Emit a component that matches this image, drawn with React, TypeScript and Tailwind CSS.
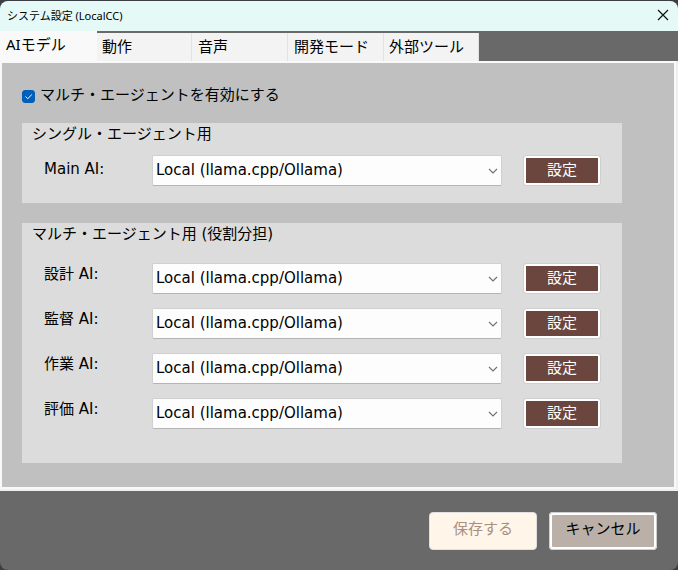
import React, { useState } from 'react';

const tabs = ['AIモデル', '動作', '音声', '開発モード', '外部ツール'];

const roles = [
    { id: 'design', label: '設計 AI:' },
    { id: 'supervise', label: '監督 AI:' },
    { id: 'work', label: '作業 AI:' },
    { id: 'review', label: '評価 AI:' },
];

const ModelRow: React.FC<{ id: string; label: string; top?: boolean }> = ({ id, label, top }) => (
    <div className="flex h-[31px] items-center">
        <label htmlFor={id} className={top ? 'w-[108px] shrink-0 self-start pt-px' : 'w-[108px] shrink-0 pb-1'}>
            {label}
        </label>
        <div className="relative min-w-0 flex-1">
            <select
                id={id}
                className="block h-[31px] w-full appearance-none rounded-xs border border-[#d0d0d0] border-b-[#b4b4b4] bg-[#fdfdfd] pb-px pl-[3px] pr-6 text-black"
            >
                <option>Local (llama.cpp/Ollama)</option>
            </select>
            <svg
                className="pointer-events-none absolute right-1 top-3 h-2 w-[10px]"
                viewBox="0 0 10 8"
                fill="none"
                stroke="#707070"
                strokeWidth="1.1"
            >
                <path d="M1 2 L5 6 L9 2" />
            </svg>
        </div>
        <button
            type="button"
            className="ml-[22px] mr-px h-[29px] w-[76px] shrink-0 rounded-xs border-2 border-white bg-[#6b463f] pb-0.5 leading-5 text-white outline outline-[#cfcfcf]"
        >
            設定
        </button>
    </div>
);

const App: React.FC = () => {
    const [activeTab, setActiveTab] = useState(tabs[0]);
    const [multiAgent, setMultiAgent] = useState(true);

    return (
        <div className="min-h-screen bg-[#3c3e45] pt-px font-['DejaVu_Sans','Noto_Sans_CJK_JP',sans-serif] text-[15px] leading-5 text-black">
            <div className="flex min-h-[calc(100vh-1px)] flex-col overflow-hidden rounded-lg bg-[#696969]">
                <header className="flex h-[30px] shrink-0 items-center justify-between bg-[#e5f9f6] pl-[7px] pr-2">
                    <h1 className="font-['Noto_Sans','Noto_Sans_CJK_JP',sans-serif] text-[11px]">
                        システム設定 (LocalCC)
                    </h1>
                    <button type="button" aria-label="閉じる" className="mb-0.5 p-px">
                        <svg className="size-3" viewBox="0 0 12 12" stroke="#111" strokeWidth="1.2">
                            <path d="M1 1 L11 11 M11 1 L1 11" />
                        </svg>
                    </button>
                </header>

                <div
                    role="tablist"
                    className="flex h-[30px] shrink-0 items-end font-['Noto_Sans','Noto_Sans_CJK_JP',sans-serif]"
                >
                    {tabs.map((tab) => (
                        <button
                            key={tab}
                            type="button"
                            role="tab"
                            aria-selected={activeTab === tab}
                            onClick={() => setActiveTab(tab)}
                            className={
                                activeTab === tab
                                    ? 'h-[30px] w-[97px] bg-[#f9f9f9] pb-1 pl-1.5 text-left'
                                    : 'h-7 w-[95px] border-r border-[#e2e2e2] bg-[#f3f3f3] pb-0.5 pl-[5px] text-left nth-[3]:w-24 nth-[3]:pl-1.5 nth-[4]:w-24 nth-[4]:pl-1.5'
                            }
                        >
                            {tab}
                        </button>
                    ))}
                </div>

                <main className="flex flex-1 flex-col border-b-2 border-r-2 border-[#efefef] bg-[#f9f9f9]">
                    <div className="m-0.5 flex-1 bg-[#c0c0c0] px-5 pb-6 pt-[22px]">
                        <label className="flex h-5 w-fit items-center gap-[5px]">
                            <span className="relative mt-0.5 size-[13px]">
                                <input
                                    type="checkbox"
                                    checked={multiAgent}
                                    onChange={(e) => setMultiAgent(e.target.checked)}
                                    className="block size-[13px] appearance-none rounded-[3px] border border-[#005fb8] bg-white checked:bg-[#005fb8]"
                                />
                                {multiAgent && (
                                    <svg
                                        className="pointer-events-none absolute inset-0 size-[13px]"
                                        viewBox="0 0 13 13"
                                        fill="none"
                                        stroke="#fff"
                                    >
                                        <path d="M3.5 6.5 L5.7 8.7 L9.8 4.6" />
                                    </svg>
                                )}
                            </span>
                            マルチ・エージェントを有効にする
                        </label>

                        <section className="mt-[18px] h-20 max-w-[600px] bg-[#dcdcdc] pl-[22px] pr-[21px]">
                            <h2 className="-ml-3 h-8 pt-px">シングル・エージェント用</h2>
                            <ModelRow id="main-ai" label="Main AI:" />
                        </section>

                        <section className="mt-5 h-60 max-w-[600px] bg-[#dcdcdc] pl-[22px] pr-[21px]">
                            <h2 className="-ml-3 h-10 pt-px">マルチ・エージェント用 (役割分担)</h2>
                            <div className="flex flex-col gap-3.5">
                                {roles.map((role) => (
                                    <ModelRow key={role.id} id={role.id} label={role.label} top />
                                ))}
                            </div>
                        </section>
                    </div>
                </main>

                <footer className="flex h-[79px] shrink-0 items-center justify-end gap-3 pr-[21px]">
                    <button
                        type="button"
                        disabled
                        className="h-[38px] w-[108px] rounded-sm border border-[#e0e0e0] bg-[#fff5e9] pb-1 text-[#a89080]"
                    >
                        保存する
                    </button>
                    <button
                        type="button"
                        className="h-[38px] w-[108px] rounded-sm border-3 border-white bg-[#bbb0a8] pb-1 outline outline-[#cfcfcf] -outline-offset-1"
                    >
                        キャンセル
                    </button>
                </footer>
            </div>
        </div>
    );
};

export default App;
